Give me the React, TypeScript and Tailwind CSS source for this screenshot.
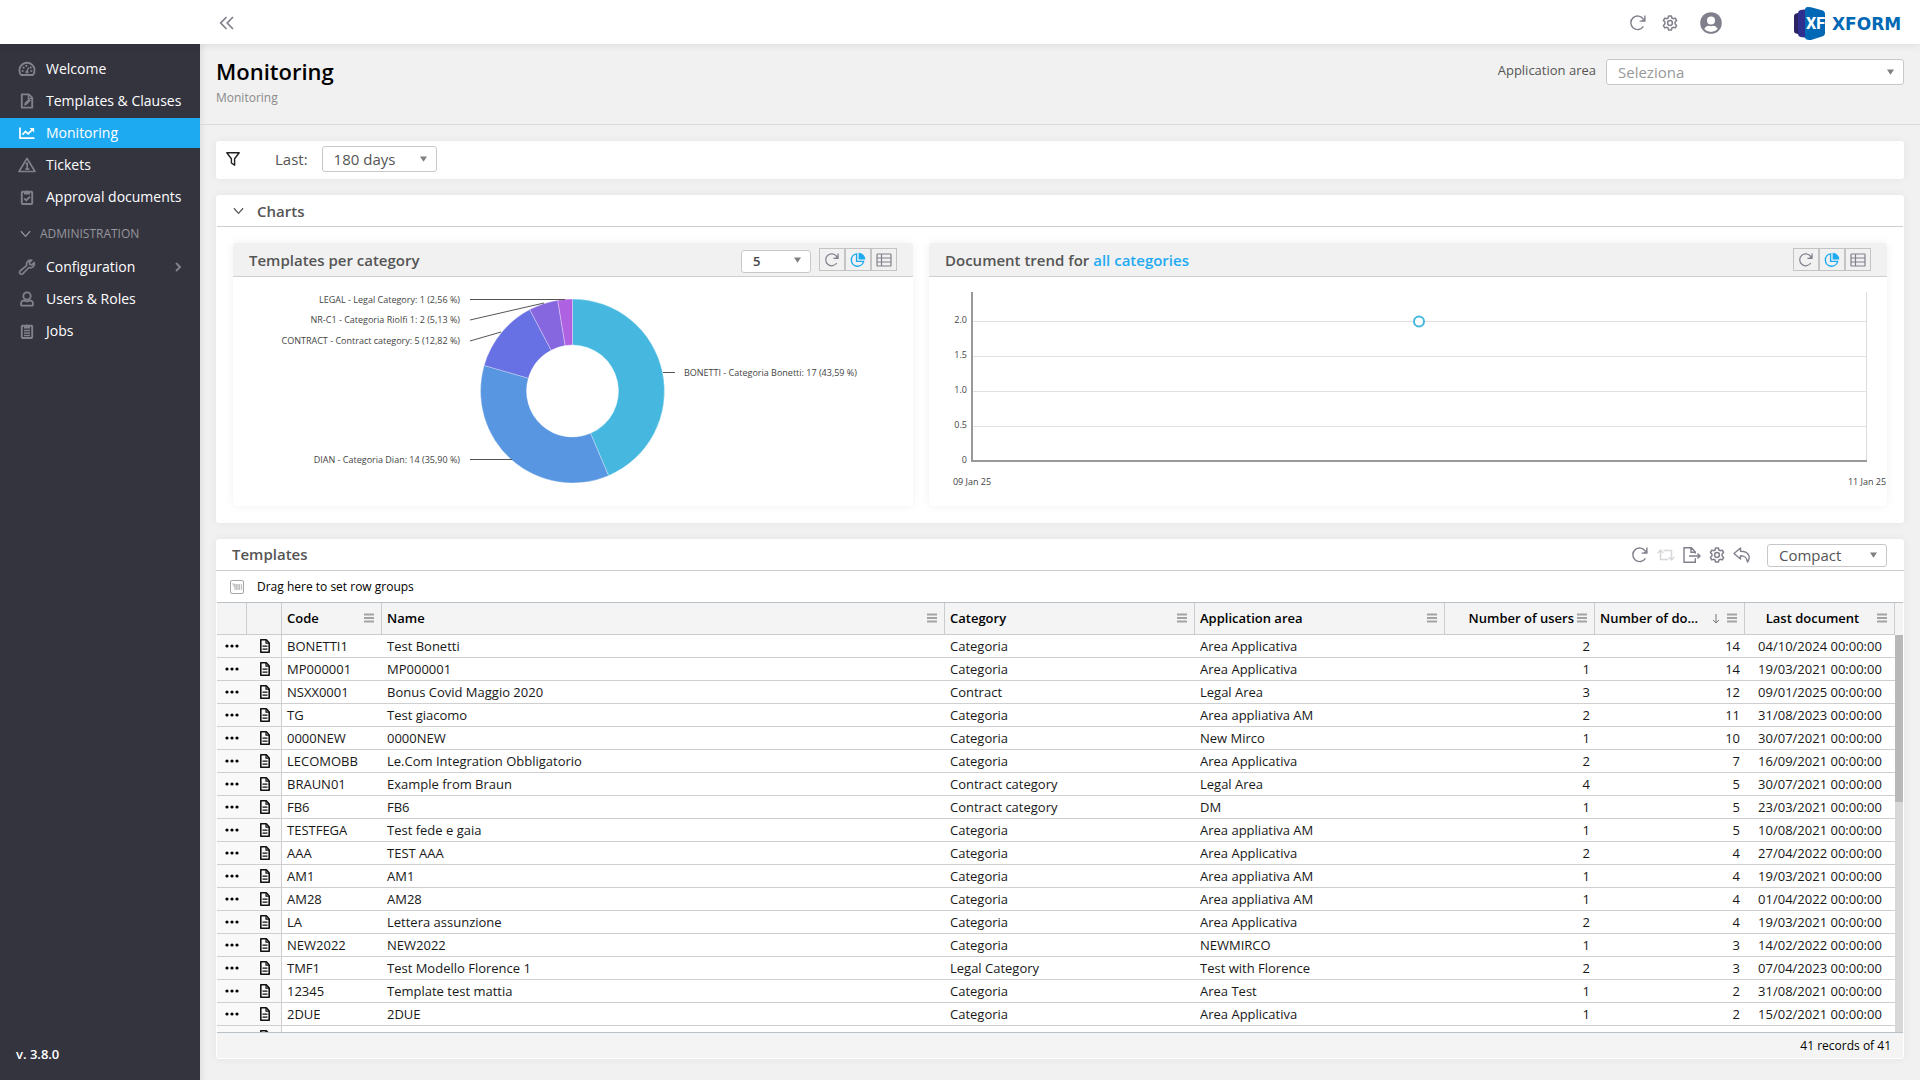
import React from "react";

type IconProps = { className?: string };

const RefreshIcon = ({ className = "" }: IconProps) => (
  <svg viewBox="0 0 16 16" className={className} fill="none" stroke="currentColor" strokeWidth="1.4">
    <path d="M13.4 11.4A6.8 6.8 0 1 1 13.400 4.200" />
    <path d="M14.900.6v5.500H9.600" />
    <path d="M14.900 2.600v3.500h-3.500z" fill="currentColor" stroke="none" />
  </svg>
);

const gearPath =
  "M6.6 1h2.8l.5 2 1.3.7 2-.6 1.4 2.4-1.5 1.5v2l1.5 1.5-1.4 2.4-2-.6-1.3.7-.5 2H6.6l-.5-2-1.3-.7-2 .6-1.4-2.4L2.9 9V7L1.4 5.5l1.4-2.4 2 .6L6.100 3z";

const GearIcon = ({ className = "" }: IconProps) => (
  <svg viewBox="0 0 16 16" className={className} fill="none" stroke="currentColor" strokeWidth="1.5" strokeLinejoin="round">
    <path d={gearPath} />
    <circle cx="8" cy="8" r="2.4" />
  </svg>
);

const PieIcon = ({ className = "" }: IconProps) => (
  <svg viewBox="0 0 16 16" className={className}>
    <path d="M8.600 0.700A6.700 6.700 0 0 1 15.300 7.400H8.600z" fill="currentColor" />
    <path d="M6.600 1.900A6.200 6.200 0 1 0 13.600 9.400H6.600z" fill="none" stroke="currentColor" strokeWidth="1.4" />
  </svg>
);

const GridIcon = ({ className = "" }: IconProps) => (
  <svg viewBox="0 0 16 16" className={className} fill="none" stroke="currentColor" strokeWidth="1.2">
    <rect x="1" y="2" width="14" height="12" rx="0.6" />
    <path d="M1 6h14M1 10h14M5.500 2v12" />
  </svg>
);

const GaugeIcon = () => (
  <svg viewBox="0 0 18 16" className="h-4 w-[18px]" fill="none" stroke="currentColor" strokeWidth="1.8">
    <path d="M3 14A7.600 7.600 0 1 1 15 14z" strokeLinejoin="round" />
    <path d="M8.600 11.500l1.900-5" strokeWidth="1.4" />
    <circle cx="9" cy="11" r="1.600" fill="currentColor" stroke="none" />
    <g fill="currentColor" stroke="none">
      <circle cx="4.600" cy="10" r="1.100" />
      <circle cx="5.600" cy="6.700" r="1.100" />
      <circle cx="8.300" cy="4.800" r="1.100" />
      <circle cx="13.400" cy="10" r="1.100" />
      <circle cx="12.600" cy="6.700" r="1.100" />
    </g>
  </svg>
);

const DocEditIcon = () => (
  <svg viewBox="0 0 18 16" className="h-4 w-[18px]" fill="none" stroke="currentColor" strokeWidth="1.9">
    <path d="M3.800 1.400h7l3.400 3.300v9.900H3.800z" strokeLinejoin="round" />
    <path d="M10.300 1.500v3.800h3.800" strokeWidth="1.200" />
    <path d="M6 12.700l.7-3 4.200-4.200 2.100 2.100-4.200 4.200z" fill="currentColor" stroke="none" />
  </svg>
);

const TrendIcon = () => (
  <svg viewBox="0 0 18 16" className="h-4 w-[18px]" fill="none" stroke="currentColor" strokeWidth="1.700">
    <path d="M2 2.500v10.700h14.500" />
    <path d="M4.500 9.600l3-3.200 2.600 2.500 4.300-4.300" />
    <path d="M11.500 3h4.600v4.600z" fill="currentColor" stroke="none" />
  </svg>
);

const AlertIcon = () => (
  <svg viewBox="0 0 18 16" className="h-4 w-[18px]" fill="none" stroke="currentColor" strokeWidth="1.700">
    <path d="M9 1.400L17 14.500H1z" strokeLinejoin="round" />
    <path d="M7.600 6.300H10M9.200 6v6M7.300 12.200h4" />
  </svg>
);

const ClipboardIcon = ({ list = false }: { list?: boolean }) => (
  <svg viewBox="0 0 18 16" className="h-4 w-[18px]" fill="none" stroke="currentColor" strokeWidth="1.900">
    <rect x="3.800" y="2.700" width="10.400" height="12.300" rx="0.800" />
    <path d="M6 5.600V2.300h1.700a1.400 1.400 0 0 1 2.600 0H12v3.300z" fill="currentColor" stroke="none" />
    {list ? <path d="M6 7.500h6M6 10h6M6 12.500h6" strokeWidth="1.300" /> : <path d="M6.300 9.300l2 2 3.600-3.600" />}
  </svg>
);

const WrenchIcon = () => (
  <svg viewBox="0 0 18 16" className="h-4 w-[18px]" fill="none" stroke="currentColor" strokeWidth="1.700" strokeLinejoin="round">
    <path d="M13.800 1.300a4 4 0 0 0-5 5.100L2.100 12a1.900 1.900 0 1 0 2.800 2.700L11 8.500a4 4 0 0 0 5.200-4.900l-2.400 2.300-2-.500-.500-2z" />
  </svg>
);

const UserIcon = () => (
  <svg viewBox="0 0 18 16" className="h-4 w-[18px]" fill="none" stroke="currentColor" strokeWidth="1.800">
    <circle cx="9" cy="5" r="3.700" />
    <path d="M5.900 9.300c-2 .4-2.900 1.800-2.900 3.400v1c0 .6.400 1 1 1h10c.6 0 1-.4 1-1v-1c0-1.600-.9-3-2.900-3.400-2 1.300-4.200 1.300-6.200 0z" />
  </svg>
);

const ChevronDown = ({ className = "" }: IconProps) => (
  <svg viewBox="0 0 12 8" className={className} fill="none" stroke="currentColor" strokeWidth="1.300">
    <path d="M1 1l5 5.500L11 1" />
  </svg>
);

const MenuLines = () => (
  <button type="button" aria-label="Column menu" className="shrink-0 pb-0.5 text-[#a3a3a3]">
    <svg viewBox="0 0 10 10" className="size-2.5">
      <path d="M0 1.500h10M0 5h10M0 8.500h10" stroke="currentColor" strokeWidth="2" />
    </svg>
  </button>
);

const FileIcon = () => (
  <svg viewBox="0 0 12 16" className="h-4 w-3" fill="none" stroke="#111" strokeWidth="1.600">
    <path d="M1.800 1.800h5.500L10.200 5v9.200H1.800z" strokeLinejoin="round" />
    <path d="M7 2v3.200h3" strokeWidth="1.200" />
    <path d="M3.500 8.200h5M3.500 11.200h5" strokeWidth="1.300" />
  </svg>
);

const Logo = () => (
  <svg viewBox="0 0 110 36" className="h-9 w-[110px]" role="img" aria-label="XFORM">
    <path d="M0 10q0-2 2-2.500L8 6v23l-6-1.500Q0 27 0 25z" fill="#2a2462" />
    <path d="M4 7q0-2.500 2.500-3L14 3v29l-7.500-1Q4 30.500 4 28z" fill="#2f2f8f" />
    <path d="M11 4q0-3 3-2.900l3 .1 11 3q3 1 3 3.800v19q0 2.800-3 3.600L17 34q-6 .5-6-3z" fill="#0068b5" />
    <text x="12" y="23" fontFamily="Roboto, sans-serif" fontWeight="800" fontSize="16" fill="#fff">
      XF
    </text>
    <text x="38" y="24" fontFamily="DejaVu Sans, sans-serif" fontWeight="700" fontSize="17" fill="#0068b5">
      XFORM
    </text>
  </svg>
);

function PickList({
  label,
  options,
  className,
  selectClassName,
}: {
  label: string;
  options: string[];
  className: string;
  selectClassName: string;
}) {
  return (
    <div className={`relative ${className}`}>
      <select
        aria-label={label}
        className={`h-full w-full appearance-none rounded-[3px] border border-[#c8c8c8] bg-white outline-none ${selectClassName}`}
      >
        {options.map((o) => (
          <option key={o}>{o}</option>
        ))}
      </select>
      <svg viewBox="0 0 8 6" className="pointer-events-none absolute inset-y-0 right-2.5 my-auto h-1.5 w-[7px]">
        <path d="M0 0h8L4 6z" fill="#808080" />
      </svg>
    </div>
  );
}

const navMain = [
  { label: "Welcome", icon: <GaugeIcon /> },
  { label: "Templates & Clauses", icon: <DocEditIcon /> },
  { label: "Monitoring", icon: <TrendIcon />, active: true },
  { label: "Tickets", icon: <AlertIcon /> },
  { label: "Approval documents", icon: <ClipboardIcon /> },
];

const navAdmin = [
  { label: "Configuration", icon: <WrenchIcon />, sub: true },
  { label: "Users & Roles", icon: <UserIcon /> },
  { label: "Jobs", icon: <ClipboardIcon list /> },
];

function NavItem({ label, icon, active, sub }: { label: string; icon: React.ReactNode; active?: boolean; sub?: boolean }) {
  return (
    <a
      href="#"
      className={`flex h-[30px] items-center gap-[10px] pr-[18px] pb-px pl-[18px] text-sm whitespace-nowrap text-white ${active ? "bg-[#1eaaf1]" : ""}`}
    >
      <span className={`shrink-0 ${active ? "text-white" : "text-[#81818c]"}`}>{icon}</span>
      <span className="flex-1">{label}</span>
      {sub && (
        <svg viewBox="0 0 8 10" className="h-2.5 w-2 text-[#81818c]" fill="none" stroke="currentColor" strokeWidth="2">
          <path d="M2 1l4 4-4 4" />
        </svg>
      )}
    </a>
  );
}

function Sidebar() {
  return (
    <aside className="flex w-[200px] shrink-0 flex-col bg-[#34343f] pt-[10px]">
      <nav className="flex flex-col gap-0.5">
        {navMain.map((n) => (
          <NavItem key={n.label} {...n} />
        ))}
        <button type="button" className="mt-1 flex h-8 items-center gap-[9px] pl-5 text-xs font-medium text-[#96969c]">
          <ChevronDown className="h-2 w-[11px]" />
          ADMINISTRATION
        </button>
        {navAdmin.map((n) => (
          <NavItem key={n.label} {...n} />
        ))}
      </nav>
      <div className="mt-auto pb-4 pl-4 text-[13px] font-semibold text-white">v. 3.8.0</div>
    </aside>
  );
}

const slices = [
  { value: 17, color: "#46b8e0" },
  { value: 14, color: "#5896e1" },
  { value: 5, color: "#6771e3" },
  { value: 2, color: "#8767df" },
  { value: 1, color: "#ae62e2" },
];

function slicePath(start: number, end: number) {
  const pt = (f: number, r: number) => {
    const a = f * 2 * Math.PI;
    return `${339.5 + r * Math.sin(a)} ${114 - r * Math.cos(a)}`;
  };
  const large = end - start > 0.5 ? 1 : 0;
  return `M${pt(start, 92)}A92 92 0 ${large} 1 ${pt(end, 92)}L${pt(end, 46)}A46 46 0 ${large} 0 ${pt(start, 46)}Z`;
}

function Donut() {
  const total = slices.reduce((s, x) => s + x.value, 0);
  let acc = 0;
  return (
    <svg viewBox="0 0 680 229" className="block w-full" fontSize="9" fill="#444">
      {slices.map((s) => {
        const start = acc / total;
        acc += s.value;
        return <path key={s.color} d={slicePath(start, acc / total)} fill={s.color} stroke="#fff" strokeOpacity="0.3" />;
      })}
      <g fill="none" stroke="#555">
        <path d="M237 22.500H332M237 43l74-17M237 64l31-9M237 182.500h42M430 95.500h12" />
      </g>
      <g textAnchor="end">
        <text x="227" y="26">LEGAL - Legal Category: 1 (2,56 %)</text>
        <text x="227" y="46">NR-C1 - Categoria Riolfi 1: 2 (5,13 %)</text>
        <text x="227" y="67">CONTRACT - Contract category: 5 (12,82 %)</text>
        <text x="227" y="186">DIAN - Categoria Dian: 14 (35,90 %)</text>
      </g>
      <text x="451" y="99">BONETTI - Categoria Bonetti: 17 (43,59 %)</text>
    </svg>
  );
}

function Trend() {
  const ticks = ["2.0", "1.5", "1.0", "0.5"];
  return (
    <svg viewBox="0 0 958 229" className="block w-full" fontSize="9" fill="#444">
      {ticks.map((t, i) => (
        <g key={t}>
          <path d={`M44 ${44.5 + i * 35}H938`} stroke="#e0e0e0" />
          <text x="38" y={46 + i * 35} textAnchor="end">
            {t}
          </text>
        </g>
      ))}
      <text x="38" y="186" textAnchor="end">0</text>
      <path d="M937.500 15v169" stroke="#dcdcdc" />
      <path d="M43 15v169" stroke="#999" strokeWidth="2" />
      <path d="M42 184H938" stroke="#999" strokeWidth="2" />
      <circle cx="490" cy="44.500" r="5" fill="#fff" stroke="#46b8e0" strokeWidth="2" />
      <text x="43" y="208" textAnchor="middle">09 Jan 25</text>
      <text x="938" y="208" textAnchor="middle">11 Jan 25</text>
    </svg>
  );
}

function ChartTools() {
  const cell = "flex h-[23px] w-[26px] items-center justify-center border border-[#c4c4c4]";
  return (
    <div className="flex text-[#80808c]">
      <button type="button" aria-label="Refresh" className={cell}>
        <RefreshIcon className="size-3.5" />
      </button>
      <button type="button" aria-label="Chart view" className={`${cell} text-[#1eaaf1]`}>
        <PieIcon className="size-4" />
      </button>
      <button type="button" aria-label="Table view" className={cell}>
        <GridIcon className="size-4" />
      </button>
    </div>
  );
}

const U = "00:00:00";
const rows: [string, string, string, string, number, number, string][] = [
  ["BONETTI1", "Test Bonetti", "Categoria", "Area Applicativa", 2, 14, `04/10/2024 ${U}`],
  ["MP000001", "MP000001", "Categoria", "Area Applicativa", 1, 14, `19/03/2021 ${U}`],
  ["NSXX0001", "Bonus Covid Maggio 2020", "Contract", "Legal Area", 3, 12, `09/01/2025 ${U}`],
  ["TG", "Test giacomo", "Categoria", "Area appliativa AM", 2, 11, `31/08/2023 ${U}`],
  ["0000NEW", "0000NEW", "Categoria", "New Mirco", 1, 10, `30/07/2021 ${U}`],
  ["LECOMOBB", "Le.Com Integration Obbligatorio", "Categoria", "Area Applicativa", 2, 7, `16/09/2021 ${U}`],
  ["BRAUN01", "Example from Braun", "Contract category", "Legal Area", 4, 5, `30/07/2021 ${U}`],
  ["FB6", "FB6", "Contract category", "DM", 1, 5, `23/03/2021 ${U}`],
  ["TESTFEGA", "Test fede e gaia", "Categoria", "Area appliativa AM", 1, 5, `10/08/2021 ${U}`],
  ["AAA", "TEST AAA", "Categoria", "Area Applicativa", 2, 4, `27/04/2022 ${U}`],
  ["AM1", "AM1", "Categoria", "Area appliativa AM", 1, 4, `19/03/2021 ${U}`],
  ["AM28", "AM28", "Categoria", "Area appliativa AM", 1, 4, `01/04/2022 ${U}`],
  ["LA", "Lettera assunzione", "Categoria", "Area Applicativa", 2, 4, `19/03/2021 ${U}`],
  ["NEW2022", "NEW2022", "Categoria", "NEWMIRCO", 1, 3, `14/02/2022 ${U}`],
  ["TMF1", "Test Modello Florence 1", "Legal Category", "Test with Florence", 2, 3, `07/04/2023 ${U}`],
  ["12345", "Template test mattia", "Categoria", "Area Test", 1, 2, `31/08/2021 ${U}`],
  ["2DUE", "2DUE", "Categoria", "Area Applicativa", 1, 2, `15/02/2021 ${U}`],
];

const th = "h-8 border-r border-b border-[#c9cdd0] pr-[7px] pl-[5px] font-semibold";
const td = "h-[23px] border-b border-[#cfcfcf] px-[5px] leading-5 whitespace-nowrap";

function HeadCell({ label }: { label: string }) {
  return (
    <th scope="col" className={th}>
      <div className="flex items-center justify-between">
        <span>{label}</span>
        <MenuLines />
      </div>
    </th>
  );
}

function RowTools() {
  return (
    <>
      <td className="h-[23px] border-b border-[#cfcfcf] bg-[#f9f9f9]">
        <button type="button" aria-label="Row actions" className="mx-auto block">
          <svg viewBox="0 0 14 4" className="h-1 w-3.5">
            <circle cx="2" cy="2" r="1.600" />
            <circle cx="7" cy="2" r="1.600" />
            <circle cx="12" cy="2" r="1.600" />
          </svg>
        </button>
      </td>
      <td className="h-[23px] border-r border-b border-[#cfcfcf] bg-[#f9f9f9] pl-px">
        <button type="button" aria-label="Open template" className="mx-auto block">
          <FileIcon />
        </button>
      </td>
    </>
  );
}

function TemplatesTable() {
  return (
    <div className="mx-px flex min-h-0 flex-1 overflow-hidden border-y border-[#b9c1c6]">
      <div className="min-w-0 flex-1 overflow-hidden">
        <table className="w-full table-fixed border-separate border-spacing-0 text-left text-[13px] text-[#181818]">
          <colgroup>
            <col className="w-[30px]" />
            <col className="w-[35px]" />
            <col className="w-[100px]" />
            <col />
            <col className="w-[250px]" />
            <col className="w-[250px]" />
            <col className="w-[150px]" />
            <col className="w-[150px]" />
            <col className="w-[150px]" />
          </colgroup>
          <thead className="bg-[#f4f4f4] text-black">
            <tr>
              <th className={th} aria-label="Actions" />
              <th className={th} aria-label="Document" />
              <HeadCell label="Code" />
              <HeadCell label="Name" />
              <HeadCell label="Category" />
              <HeadCell label="Application area" />
              <th scope="col" className={th}>
                <div className="flex items-center justify-end gap-[3px] whitespace-nowrap">
                  <span>Number of users</span>
                  <MenuLines />
                </div>
              </th>
              <th scope="col" className={th}>
                <div className="flex items-center whitespace-nowrap">
                  <span>Number of do...</span>
                  <svg viewBox="0 0 8 10" className="mr-[7px] ml-auto h-2.5 w-2" fill="none" stroke="#777">
                    <path d="M4 0v9M1 6l3 3 3-3" />
                  </svg>
                  <MenuLines />
                </div>
              </th>
              <th scope="col" className={th}>
                <div className="flex items-center gap-0.5 whitespace-nowrap">
                  <span className="flex-1 text-center">Last document</span>
                  <MenuLines />
                </div>
              </th>
            </tr>
          </thead>
          <tbody>
            {rows.map((r) => (
              <tr key={r[0]}>
                <RowTools />
                <td className={td}>{r[0]}</td>
                <td className={td}>{r[1]}</td>
                <td className={td}>{r[2]}</td>
                <td className={td}>{r[3]}</td>
                <td className={`${td} text-right`}>{r[4]}</td>
                <td className={`${td} text-right`}>{r[5]}</td>
                <td className={`${td} text-center`}>{r[6]}</td>
              </tr>
            ))}
            <tr>
              <RowTools />
              <td className={td} colSpan={7} />
            </tr>
          </tbody>
        </table>
      </div>
      <div className="flex w-2 shrink-0 flex-col">
        <div className="h-8 bg-[#f4f4f4]" />
        <div className="flex-1 bg-[#d8d8d8]">
          <div className="h-[42%] bg-[#b8b8b8]" />
        </div>
      </div>
    </div>
  );
}

const card = "rounded-[3px] bg-white shadow-[0_0_10px_rgba(0,0,0,0.06)]";

function PanelHead({ children, right }: { children: React.ReactNode; right: React.ReactNode }) {
  return (
    <div className="flex h-[34px] items-center justify-between border-b border-[#cfcfcf] bg-[#f1f1f1] px-4">
      <h3 className="pt-px text-[15px] font-semibold text-[#555]">{children}</h3>
      <div className="flex items-center gap-2">{right}</div>
    </div>
  );
}

export default function App() {
  return (
    <div className="flex h-screen flex-col overflow-hidden bg-[#f1f1f1] font-['Open_Sans',sans-serif] text-[#555]">
      <header className="z-10 flex h-11 shrink-0 items-center bg-white pr-4 pl-[219px] text-[#80808c] shadow-[0_0_10px_rgba(0,0,0,0.1)]">
        <button type="button" aria-label="Collapse menu">
          <svg viewBox="0 0 16 14" className="mt-0.5 h-3.5 w-4" fill="none" stroke="currentColor" strokeWidth="1.700">
            <path d="M7.500 1L1.700 7l5.800 6M14 1L8.200 7l5.800 6" />
          </svg>
        </button>
        <div className="ml-auto flex items-center">
          <button type="button" aria-label="Refresh">
            <RefreshIcon className="mt-0.5 size-4" />
          </button>
          <button type="button" aria-label="Settings" className="ml-4">
            <GearIcon className="mt-0.5 size-4" />
          </button>
          <button type="button" aria-label="Account" className="ml-[22px]">
            <svg viewBox="0 0 22 22" className="mt-0.5 size-[22px]">
              <circle cx="11" cy="11" r="10.800" fill="currentColor" />
              <circle cx="11" cy="8.500" r="4" fill="#fff" />
              <path d="M4.300 17c1-2.600 3-3.300 4.400-3.300 1.500.6 3.100.6 4.600 0 1.400 0 3.400.7 4.400 3.300a9 9 0 0 1-13.400 0z" fill="#fff" />
            </svg>
          </button>
          <a href="#" aria-label="XFORM home" className="ml-[72px] pt-1">
            <Logo />
          </a>
        </div>
      </header>

      <div className="flex min-h-0 flex-1">
        <Sidebar />
        <main className="flex min-w-0 flex-1 flex-col shadow-[inset_6px_0_6px_-4px_rgba(0,0,0,0.08)]">
          <div className="flex h-[81px] shrink-0 items-start justify-between border-b border-[#dadada] px-4">
            <div className="pt-[11px]">
              <h1 className="text-[22px] leading-8 font-semibold text-black">Monitoring</h1>
              <p className="pt-px text-xs leading-5 text-[#8a8a8a]">Monitoring</p>
            </div>
            <div className="flex items-center gap-2.5 pt-[15px]">
              <span className="pb-0.5 text-[13px]">Application area</span>
              <PickList label="Application area" options={["Seleziona"]} className="h-[26px] w-[298px]" selectClassName="pl-[11px] text-[15px] text-[#999]" />
            </div>
          </div>

          <div className="flex min-h-0 flex-1 flex-col gap-4 px-4 pt-4 pb-[21px]">
            <section className={`flex h-[38px] shrink-0 items-center pb-0.5 pl-[10px] ${card}`}>
              <svg viewBox="0 0 14 14" className="size-3.5" fill="none" stroke="#222" strokeWidth="1.400" strokeLinejoin="round">
                <path d="M.8.800h12.400L8.600 6.800v6.400L5.400 11V6.800z" />
              </svg>
              <span className="mr-[14px] ml-[35px] text-[15px]">Last:</span>
              <PickList label="Last" options={["180 days"]} className="h-[26px] w-[115px]" selectClassName="pl-[11px] text-[15px] text-[#555]" />
            </section>

            <section className={`shrink-0 pb-[17px] ${card}`}>
              <h2 className="mx-px flex h-8 items-center border-b border-[#cfcfcf] pt-px pl-4 text-[15px] font-semibold">
                <button type="button" className="flex items-center gap-[13px]">
                  <ChevronDown className="h-2 w-[11px]" />
                  Charts
                </button>
              </h2>
              <div className="grid grid-cols-[680fr_958fr] gap-4 px-[17px] pt-4">
                <div className={`overflow-hidden ${card}`}>
                  <PanelHead
                    right={
                      <>
                        <PickList label="Number of categories" options={["5"]} className="h-[23px] w-[70px]" selectClassName="pl-[11px] text-[13px] font-semibold text-[#444]" />
                        <ChartTools />
                      </>
                    }
                  >
                    Templates per category
                  </PanelHead>
                  <Donut />
                </div>
                <div className={`overflow-hidden ${card}`}>
                  <PanelHead right={<ChartTools />}>
                    Document trend for{" "}
                    <a href="#" className="text-[#1eaaf1]">
                      all categories
                    </a>
                  </PanelHead>
                  <Trend />
                </div>
              </div>
            </section>

            <section className={`flex min-h-0 flex-1 flex-col pb-px ${card}`}>
              <div className="flex h-8 shrink-0 items-center justify-between border-b border-[#cfcfcf] pr-[17px] pl-4">
                <h2 className="text-[15px] font-semibold">Templates</h2>
                <div className="flex items-center text-[#80808c]">
                  <button type="button" aria-label="Refresh">
                    <RefreshIcon className="size-4" />
                  </button>
                  <button type="button" aria-label="Reset columns" className="ml-[9px] text-[#d8d8dc]">
                    <svg viewBox="0 0 18 14" className="h-3.5 w-[18px]" fill="none" stroke="currentColor" strokeWidth="1.500">
                      <path d="M11.500 11.500H3.500v-9M.800 5l2.700-3 2.700 3M6.500 2.500h8v9M11.800 9l2.700 3 2.700-3" />
                    </svg>
                  </button>
                  <button type="button" aria-label="Export" className="ml-2">
                    <svg viewBox="0 0 18 16" className="h-4 w-[18px]" fill="none" stroke="currentColor" strokeWidth="1.400">
                      <path d="M12.300 6.500V5L8.500.800H1v14.400h11.300v-4M8 .800V5.300h4.300" />
                      <path d="M6 9h11M14.500 6.500L17 9l-2.500 2.500" />
                    </svg>
                  </button>
                  <button type="button" aria-label="Settings" className="ml-2">
                    <GearIcon className="size-4" />
                  </button>
                  <button type="button" aria-label="Undo" className="ml-2">
                    <svg viewBox="0 0 18 16" className="h-4 w-[18px]" fill="none" stroke="currentColor" strokeWidth="1.400" strokeLinejoin="round">
                      <path d="M7.500 1L1 6.500 7.500 12V8.700c3.500 0 6 .8 7 6.300 3.500-5 1.500-10.500-7-10.700z" />
                    </svg>
                  </button>
                  <PickList label="Row density" options={["Compact"]} className="ml-4 h-[23px] w-[120px]" selectClassName="pl-[11px] text-[15px] leading-5 text-[#555]" />
                </div>
              </div>
              <div className="flex h-[31px] shrink-0 items-center gap-[13px] pl-[14px] text-xs text-black">
                <svg viewBox="0 0 14 14" className="size-3.5" fill="none">
                  <rect x=".5" y=".5" width="13" height="13" rx="1.500" stroke="#a6a6a6" />
                  <path d="M2 4h2v3M5 4v6M6.500 4v6M8 4v6M9.500 4v6M11.500 4v6" stroke="#c2c2c2" strokeWidth="1.200" />
                </svg>
                Drag here to set row groups
              </div>
              <TemplatesTable />
              <div className="mx-px flex h-[25px] shrink-0 items-center justify-end bg-[#f4f4f4] pr-3 text-xs text-black">41 records of 41</div>
            </section>
          </div>
        </main>
      </div>
    </div>
  );
}
